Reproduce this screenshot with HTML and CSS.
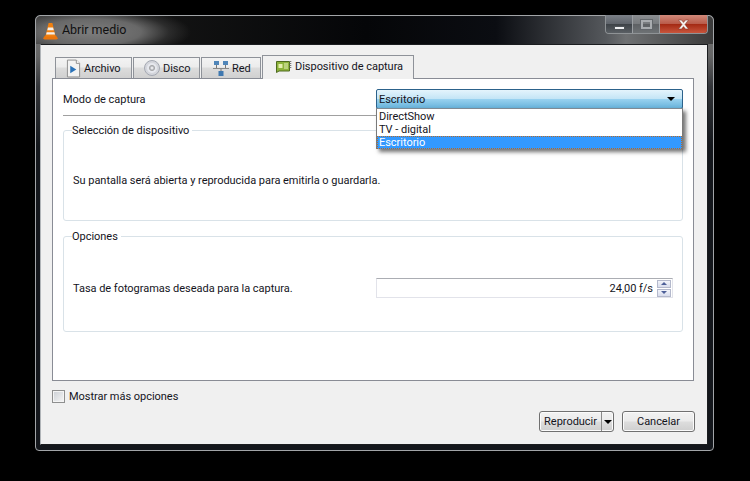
FILE: index.html
```html
<!DOCTYPE html>
<html lang="es">
<head>
<meta charset="utf-8">
<title>Abrir medio</title>
<link rel="stylesheet" href="styles.css">
</head>
<body>
<div class="window">
  <header class="titlebar">
    <svg class="vlc" width="17" height="18" viewBox="0 0 17 18"><path d="M1 16.5 L3 13.5 H14 L16 16.5 L14.5 17.5 H2.5Z" fill="#e8750c"/><path d="M6.6 1 H10.4 L13.6 14.5 H3.4Z" fill="#f08010"/><path d="M6 5.5 H11 L11.8 8.2 H5.3Z M4.7 10.3 H12.4 L13 12.6 H4.1Z" fill="#f4f0ea"/></svg>
    <span class="title">Abrir medio</span>
    <div class="controls">
      <div class="ctl ctl-min"><span class="glyph-min"></span></div>
      <div class="ctl ctl-max"><span class="glyph-max"></span></div>
      <div class="ctl ctl-close"><svg width="15" height="11" viewBox="0 0 15 11"><path d="M2.5 1 H5.5 L7.5 3.4 L9.5 1 H12.5 L9 5.5 L12.5 10 H9.5 L7.5 7.6 L5.5 10 H2.5 L6 5.5Z" fill="#f4efec" stroke="#7a2c20" stroke-width=".5"/></svg></div>
    </div>
  </header>
  <div class="client">
    <nav class="tabs">
      <div class="tab tab-archivo">
        <svg width="15" height="19" viewBox="0 0 16 19"><path d="M1.5.5 H11 L14.5 4 V18.5 H1.5Z" fill="#f2f2f2" stroke="#8b8b8b"/><path d="M11 .5 V4 H14.5" fill="#fff" stroke="#8b8b8b"/><path d="M4.5 6.5 L11 10.5 L4.5 14.5Z" fill="#2a72b8"/></svg>
        <span>Archivo</span>
      </div>
      <div class="tab tab-disco">
        <svg width="16" height="16" viewBox="0 0 16 16"><circle cx="8" cy="8" r="7.5" fill="#d4d6dc" stroke="#a4a8b2"/><circle cx="8" cy="8" r="5" fill="#e6e8ee"/><circle cx="8" cy="8" r="2.6" fill="#c2c4ca" stroke="#9a9a9a" stroke-width=".8"/><circle cx="8" cy="8" r="1" fill="#f5f5f5"/></svg>
        <span>Disco</span>
      </div>
      <div class="tab tab-red">
        <svg width="16" height="15" viewBox="0 0 16 15"><rect x="1" y="0" width="5" height="4" fill="#4f85b8"/><rect x="10" y="0" width="5" height="4" fill="#4f85b8"/><rect x="5.5" y="10" width="5" height="5" fill="#3f78b0"/><path d="M3.5 4 V7 M12.5 4 V7 M8 7 V10" stroke="#777" fill="none"/><path d="M0 7.5 H16" stroke="#888"/></svg>
        <span>Red</span>
      </div>
      <div class="tab tab-captura">
        <svg width="16" height="13" viewBox="0 0 16 13"><path d="M.5 1.5 H13.5 V11 H3 L.5 12.5Z" fill="#8db33a" stroke="#4e6a20"/><rect x="2.5" y="4" width="4" height="4" fill="#e5efb0"/><path d="M8 4 H12 M8 6 H12 M8 8 H12" stroke="#e9f2c0"/><path d="M14.5 1 V9" stroke="#777" stroke-width="1.6" stroke-dasharray="1 1"/></svg>
        <span>Dispositivo de captura</span>
      </div>
    </nav>
    <main class="pane">
      <div class="mode-row">
        <span>Modo de captura</span>
        <div class="combo">
          <span>Escritorio</span>
          <span class="arrow"></span>
          <ul class="popup">
            <li>DirectShow</li>
            <li>TV - digital</li>
            <li class="selected">Escritorio</li>
          </ul>
        </div>
      </div>
      <hr class="sep">
      <fieldset class="group group-device">
        <legend>Selección de dispositivo</legend>
        <p>Su pantalla será abierta y reproducida para emitirla o guardarla.</p>
      </fieldset>
      <fieldset class="group group-options">
        <legend>Opciones</legend>
        <div class="rate-row">
          <span>Tasa de fotogramas deseada para la captura.</span>
          <div class="spin">
            <span class="spin-value">24,00 f/s</span>
            <div class="spin-btns">
              <div class="spin-btn"><span class="tri-up"></span></div>
              <div class="spin-btn"><span class="tri-down"></span></div>
            </div>
          </div>
        </div>
      </fieldset>
    </main>
    <label class="more">
      <span class="check"></span>
      <span>Mostrar más opciones</span>
    </label>
    <footer class="actions">
      <div class="btn btn-play">
        <span class="play-label">Reproducir</span>
        <span class="play-drop"><span class="arrow"></span></span>
      </div>
      <div class="btn btn-cancel">Cancelar</div>
    </footer>
  </div>
</div>
</body>
</html>
```

FILE: styles.css
```css
* { box-sizing: border-box; }
html, body { margin: 0; height: 100%; }
body {
  background: #000;
  padding: 15px 37px 0 35px;
  font-family: Roboto, sans-serif;
  font-size: 11px;
  letter-spacing: -0.03px;
  line-height: 13px;
  color: #14141c;
  overflow: hidden;
}
.window {
  width: 679px;
  height: 436px;
  border: 1px solid #a2a5a8;
  border-radius: 5px 5px 4px 4px;
  background: linear-gradient(#777 0, #666 40px, #34363a 70px, #14171c 130px);
  padding: 0 5px 5px 4px;
  display: flex;
  flex-direction: column;
}
.titlebar {
  height: 28px;
  margin: 0 -5px 0 -4px;
  padding: 0 5px 0 6px;
  display: flex;
  align-items: center;
  gap: 2px;
  border-radius: 5px 5px 0 0;
  background:
    radial-gradient(ellipse 100px 26px at 55px 16px, #7d7d7d 0, #686868 50%, rgba(60,60,60,.6) 78%, rgba(0,0,0,0) 100%),
    linear-gradient(90deg, #4b4b4b 0, #141414 110px, #050608 330px, #0b0d12 460px, #55585c 570px, #6e7072 590px, #3a3a3a 678px);
  position: relative;
}
.vlc { margin-top: 1px; flex: none; }
.title { font-size: 12.5px; color: #101010; margin-left: 1px; margin-top: -2px; }
.controls {
  margin-left: auto;
  align-self: flex-start;
  display: flex;
  height: 19px;
  margin-top: -1px;
  border: 1px solid #8f9396;
  border-top: 0;
  border-radius: 0 0 4px 4px;
  overflow: hidden;
}
.ctl { display: flex; align-items: center; justify-content: center; height: 100%; }
.ctl-min { width: 27px; background: linear-gradient(#7b8087, #5e636a 50%, #3e4348 52%, #5a5f64); border-right: 1px solid #9a9ea2; }
.ctl-max { width: 27px; background: linear-gradient(#8a8d90, #777a7d 50%, #5e6164 52%, #6e7275); border-right: 1px solid #9a9ea2; }
.ctl-close { width: 47px; background: linear-gradient(#d0897a, #b95a48 50%, #a42a14 52%, #c8553c); }
.glyph-min { width: 11px; height: 4px; margin-top: 7px; background: #eef0f2; border: 1px solid #50555a; }
.glyph-max { width: 11px; height: 9px; border: 2px solid #a9acaf; outline: 1px solid #63676b; }
.client {
  flex: 1;
  min-height: 0;
  background: #f0f0f0;
  border: 1px solid #1b1d20;
  border-left: 1px solid #b0b4b8;
  padding: 10px 12px 0 11px;
  display: flex;
  flex-direction: column;
}
.tabs { display: flex; height: 24px; padding-left: 3px; align-items: flex-end; position: relative; z-index: 1; margin-bottom: -1px; }
.tab {
  height: 21px;
  margin-bottom: 1px;
  display: flex;
  align-items: center;
  gap: 4px;
  border: 1px solid #8e9299;
  border-bottom: 0;
  background: linear-gradient(#f3f3f3, #ececec 45%, #dcdcdc 50%, #d0d0d0);
  margin-right: 1px;
}
.tab-archivo { width: 77px; padding-left: 10px; gap: 3px; }
.tab-disco { width: 67px; padding-left: 10px; gap: 3px; }
.tab-red { width: 60px; padding-left: 11px; gap: 3px; }
.tab-captura {
  width: 152px;
  height: 24px;
  margin: 0;
  padding: 0 0 2px 13px;
  gap: 3px;
  background: #f0f0f0;
}
.pane {
  width: 642px;
  height: 303px;
  border: 1px solid #898c95;
  background: #fff;
  padding: 10px 10px 0;
}
.mode-row { display: flex; justify-content: space-between; align-items: center; height: 20px; }
.combo {
  position: relative;
  width: 307px;
  height: 20px;
  padding: 0 7px 0 2px;
  display: flex;
  align-items: center;
  justify-content: space-between;
  border: 1px solid #2c628b;
  border-radius: 2px;
  background: linear-gradient(#e4f4fc, #c4e5f6 48%, #98d1ef 52%, #68b3db);
}
.arrow { width: 0; height: 0; border: 4px solid transparent; border-top: 4px solid #000; border-bottom: 0; }
.popup {
  position: absolute;
  left: -1px;
  top: 18px;
  width: 307px;
  height: 41px;
  margin: 0;
  padding: 1px 0 0;
  list-style: none;
  background: #fff;
  border: 1px solid #7a7a7a;
  border-top-color: #7f8a94;
  box-shadow: 3px 3px 4px rgba(0,0,0,.55);
}
.popup li { height: 13px; padding-left: 2px; }
.popup .selected { background: #3399ff; color: #fff; outline: 1px dotted #b56a2a; outline-offset: -1px; }
.sep { border: 0; border-top: 1px solid #a0a0a0; margin: 6px 0 0; }
.group {
  margin: 0;
  padding: 0 9px;
  border: 1px solid #d9e2e8;
  border-radius: 3px;
  min-width: 0;
}
.group legend { padding: 0 3px 0 0; margin-left: -1px; }
.group-device { height: 97px; margin-top: 8px; }
.group-device p { margin: 37px 0 0; }
.group-options { height: 102px; margin-top: 9px; }
.rate-row { display: flex; justify-content: space-between; align-items: center; height: 20px; margin-top: 35px; }
.spin {
  width: 297px;
  height: 20px;
  display: flex;
  align-items: center;
  justify-content: flex-end;
  border: 1px solid #e2e3ea;
  border-top-color: #abadb3;
  padding-right: 1px;
  background: #fff;
}
.spin-value { margin-right: 4px; }
.spin-btns { width: 14px; display: flex; flex-direction: column; gap: 1px; }
.spin-btn {
  height: 8px;
  display: flex;
  align-items: center;
  justify-content: center;
  border: 1px solid #b4b9cc;
  background: linear-gradient(#f2f4fa, #d8dcec);
}
.tri-up { border: 3px solid transparent; border-top: 0; border-bottom: 3px solid #4d5f98; }
.tri-down { border: 3px solid transparent; border-bottom: 0; border-top: 3px solid #4d5f98; }
.more { display: flex; align-items: center; gap: 4px; height: 14px; margin-top: 8px; }
.check {
  width: 13px;
  height: 13px;
  border: 1px solid #8e8f8f;
  box-shadow: inset 0 0 0 1px #f4f4f4;
  background: linear-gradient(135deg, #cbcfd5, #f6f6f6);
}
.actions { display: flex; justify-content: flex-end; gap: 8px; margin-top: 8px; }
.btn {
  height: 21px;
  border: 1px solid #707070;
  border-radius: 3px;
  background: linear-gradient(#f2f2f2, #ebebeb 48%, #dddddd 52%, #cfcfcf);
  display: flex;
  align-items: center;
  box-shadow: inset 0 0 0 1px #fbfbfb;
}
.btn-play { width: 75px; }
.play-label { width: 61px; text-align: center; }
.play-drop { flex: 1; height: 100%; display: flex; align-items: center; justify-content: center; border-left: 1px solid #8a8a8a; }
.btn-cancel { width: 73px; justify-content: center; }
```
